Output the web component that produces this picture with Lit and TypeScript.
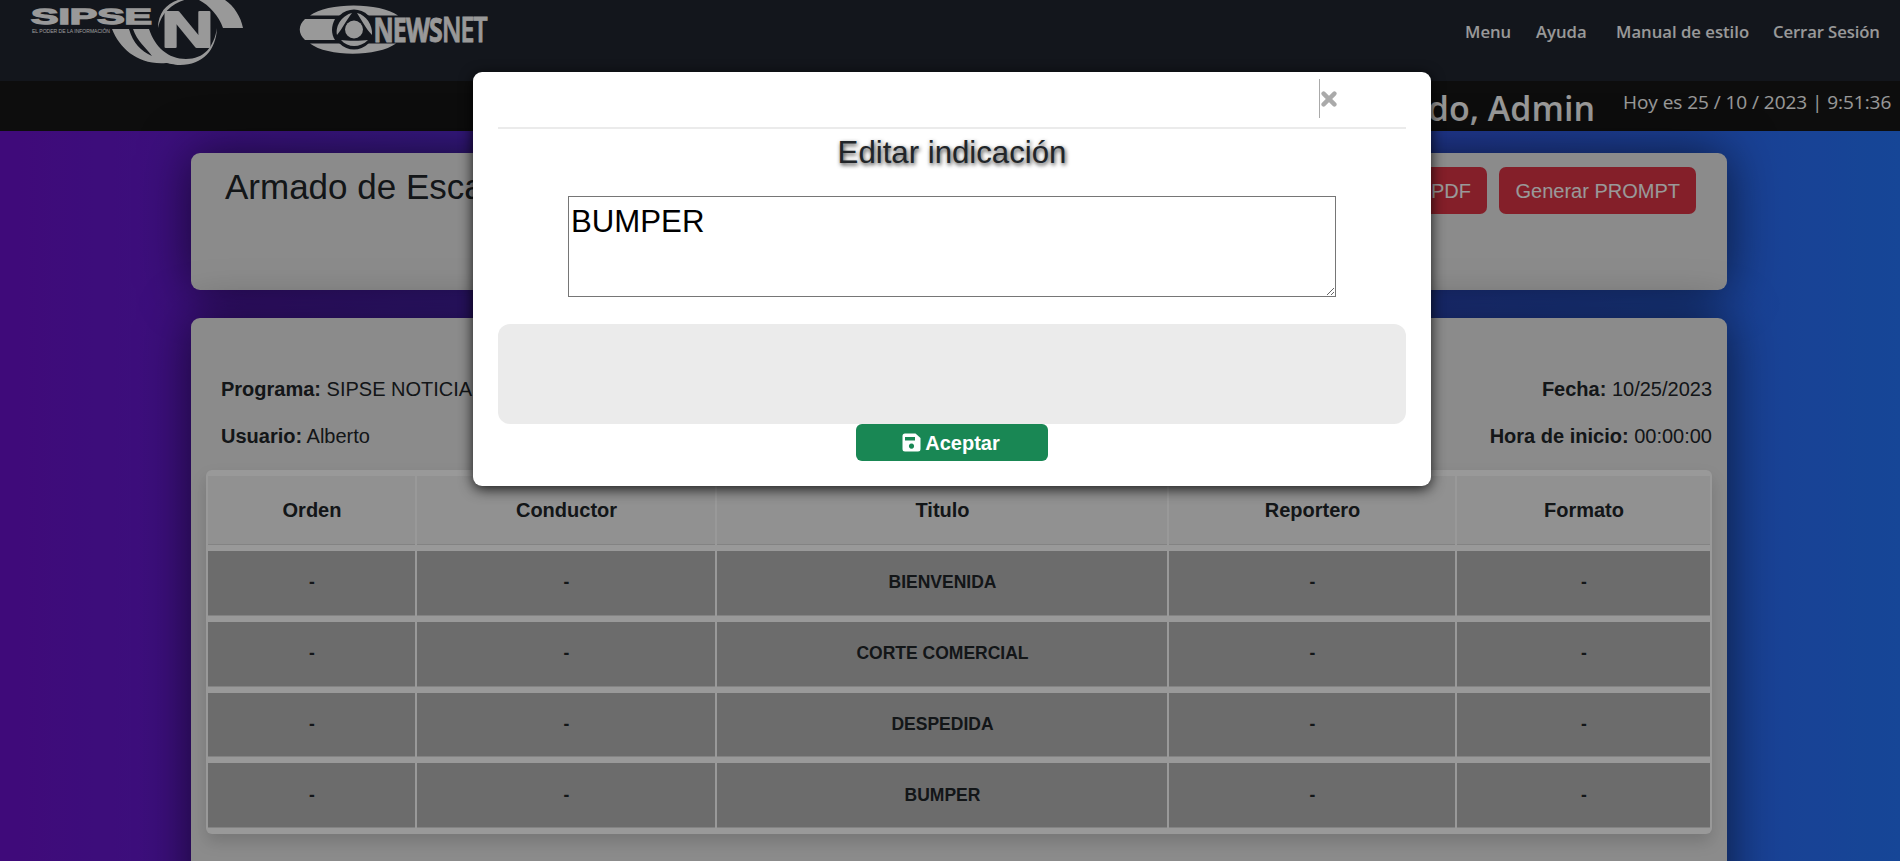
import { LitElement, html, css } from "lit";
import { customElement } from "lit/decorators.js";

const sans = css`"Liberation Sans", Arial, sans-serif`;
const ui = css`"Open Sans", "Noto Sans", sans-serif`;

@customElement("brand-sipse")
class BrandSipse extends LitElement {
  static styles = css`
    :host { display: block; }
    svg { display: block; overflow: hidden; }
    .word { font: bold 22px ${sans}; }
    .tag { font: 5px ${sans}; }
    .big { font: bold 50px ${sans}; }
  `;
  render() {
    return html`<svg width="225" height="75" viewBox="20 0 225 75" fill="#fff">
      <text class="word" x="31" y="23.500" textLength="121" lengthAdjust="spacingAndGlyphs" stroke="#fff" stroke-width="1.300">SIPSE</text>
      <text class="tag" x="32" y="33" textLength="78" lengthAdjust="spacingAndGlyphs">EL PODER DE LA INFORMACIÓN</text>
      <path d="M112 29H129C133 43 141 51 152 56C146 48 137 41 133 29H149C155 47 168 59 186 59C204 59 214 47 217 28C216 50 203 65 180 65C174 65 168 63 166 63C138 65 120 49 112 29Z"/>
      <path d="M158 28C158 8 173 -2 191 -2C175 2 162 10 158 28Z"/>
      <path d="M182 0H225C234 6 241 17 243 28H223C219 16 209 5 199 0Z"/>
      <text class="big" x="161" y="46.500" textLength="53" lengthAdjust="spacingAndGlyphs" stroke="#fff" stroke-width="1.800" stroke-linejoin="round">N</text>
    </svg>`;
  }
}

@customElement("brand-newsnet")
class BrandNewsnet extends LitElement {
  static styles = css`
    :host { display: block; }
    svg { display: block; overflow: visible; }
    .word { font: bold 34px ${ui}; letter-spacing: -1.2px; }
    .light { font-weight: 600; }
  `;
  render() {
    return html`<svg width="200" height="60" viewBox="295 0 200 60" fill="#fff">
      <path d="M310 15.500C327 2 380 2 398 15.500Z"/>
      <path d="M310 43.500C327 57 378 57 396 43.500Z"/>
      <path d="M305 19H335C331 26 331 34 335 40H305C298 34 298 25 305 19Z"/>
      <circle cx="354" cy="29.500" r="20" fill="#202530"/>
      <circle cx="354" cy="29.500" r="9"/>
      <path d="M352 13C343 15 335 25 337 35C342 29 347 19 352 13Z"/>
      <path d="M357 13C366 15 373 25 372 35C366 29 361 19 357 13Z"/>
      <path d="M341 40C346 41 362 41 368 40C360 48 348 48 341 40Z"/>
      <text class="word" transform="translate(373.500 41.500) scale(.732 1)" stroke="#fff" stroke-width=".9">NEWS<tspan class="light">NET</tspan></text>
    </svg>`;
  }
}

@customElement("edit-dialog")
class EditDialog extends LitElement {
  static styles = css`
    :host {
      display: flex; flex-direction: column; box-sizing: border-box;
      width: 958px; height: 414px; padding: 7px 25px 25px;
      background: #fff; border-radius: 9px; box-shadow: 0 3px 14px rgba(0,0,0,.85);
      font-family: ${sans}; color: #212529;
    }
    .top { height: 48px; display: flex; justify-content: flex-end; padding-right: 68px; border-bottom: 2px solid #ebebeb; }
    .close { height: 39px; border-left: 1px solid #aaa; display: flex; align-items: center; padding: 0 1px; }
    h2 { margin: 6px 0 0; font-size: 31.200px; line-height: 36px; font-weight: 400; text-align: center; text-shadow: 1px 2px 4px rgba(0,0,0,.8); }
    textarea {
      box-sizing: border-box; width: 768px; height: 101px; margin: 25px auto 0; padding: 2px;
      border: 1px solid #767676; border-radius: 0; font: 31.200px/45px ${sans}; color: #000; background: #fff;
    }
    .panel { height: 100px; margin-top: 27px; border-radius: 12px; background: #ebebeb; }
    .ok {
      align-self: center; width: 192px; height: 37px; border: 0; border-radius: 6px; padding: 0 2px 0 0;
      display: flex; align-items: center; justify-content: center; gap: 4px;
      background: #198754; color: #fff; font: bold 20px ${sans};
    }
    .ok span { padding-top: 1px; }
  `;
  render() {
    return html`
      <div class="top"><div class="close">
        <svg width="16" height="16" viewBox="0 0 16 16"><path d="M2.600 2.600 13.400 13.400M13.400 2.600 2.600 13.400" stroke="#aaa" stroke-width="4.400" stroke-linecap="round"/></svg>
      </div></div>
      <h2>Editar indicación</h2>
      <textarea .value=${"BUMPER"}></textarea>
      <div class="panel"></div>
      <button class="ok">
        <svg width="19" height="19" viewBox="0 0 19 19" fill="#fff"><path fill-rule="evenodd" d="M3 .5H13.500L18.500 5V16A2.500 2.500 0 0 1 16 18.500H3A2.500 2.500 0 0 1 .5 16V3A2.500 2.500 0 0 1 3 .5ZM3 4V7.500H13V4ZM9.500 10.500A2.600 2.600 0 1 0 9.510 10.500Z"/></svg>
        <span>Aceptar</span>
      </button>`;
  }
}

@customElement("app-root")
class AppRoot extends LitElement {
  static styles = css`
    :host { display: block; position: relative; height: 861px; overflow: hidden; font-family: ${sans}; color: #212529; }
    .page { height: 861px; display: flex; flex-direction: column; background: linear-gradient(to right, #6a11cb, #2575fc); }
    header { height: 81px; flex: none; background: #202530; display: flex; box-sizing: border-box; padding: 0 21px 0 20px; }
    .second { margin-left: 50px; }
    nav { margin-left: auto; display: flex; padding-top: 19px; font: 600 16.700px/26px ${ui}; color: #fff; white-space: nowrap; }
    .l1 { width: 71px; } .l2 { width: 80px; } .l3 { width: 157px; } .l4 { width: 106px; letter-spacing: -.1px; }
    .bar { height: 50px; flex: none; background: #161616; color: #fff; display: flex; justify-content: flex-end; box-sizing: border-box; padding-right: 9px; font-family: ${ui}; white-space: nowrap; }
    .hello { font-weight: 600; font-size: 34px; line-height: 54px; }
    .date { font-size: 19px; line-height: 42px; letter-spacing: -.05px; width: 268px; margin-left: 28px; }
    main { flex: 1; min-height: 0; padding: 22px 173px 0 191px; display: flex; flex-direction: column; gap: 28px; }
    .card { background: #e8e8e8; border-radius: 9px; box-shadow: 0 0 50px rgba(0,0,0,.6); }
    .head { height: 137px; flex: none; display: flex; justify-content: space-between; box-sizing: border-box; padding: 14px 31px 0 34px; }
    h1 { margin: 0; font-size: 35px; line-height: 40px; font-weight: 400; }
    .btns { display: flex; gap: 12px; }
    .btn { height: 47px; box-sizing: border-box; padding: 1px 16px 0 16.500px; border: 0; border-radius: 7px; background: #dc3545; color: #fff; font: 20px ${sans}; }
    .body { height: 650px; flex: none; padding: 56px 15px 0; }
    .info { display: flex; justify-content: space-between; font-size: 20px; line-height: 30px; padding-left: 15px; margin-bottom: 17px; }
    .table {
      margin-top: 19px; background: #fff; border-radius: 6px; padding: 6px 2px; display: grid;
      grid-template-columns: 207px 298px 450px 286px 253px; gap: 6px 2px; grid-template-rows: 69px repeat(4, 64.750px);
      box-shadow: 0 8px 16px rgba(0,0,0,.15);
    }
    .cell { display: flex; align-items: center; justify-content: center; font-weight: bold; font-size: 17.500px; background: #b4b4b4; border-bottom: 1px solid #dadada; padding-left: 1px; }
    .th { background: #f2f2f2; font-size: 20px; }
    .shade { position: absolute; inset: 0; background: rgba(0,0,0,.4); }
    edit-dialog { position: absolute; left: 473px; top: 72px; }
  `;
  heads = ["Orden", "Conductor", "Titulo", "Reportero", "Formato"];
  rows = ["BIENVENIDA", "CORTE COMERCIAL", "DESPEDIDA", "BUMPER"];
  render() {
    return html`
      <div class="page">
        <header>
          <brand-sipse></brand-sipse>
          <brand-newsnet class="second"></brand-newsnet>
          <nav><span class="l1">Menu</span><span class="l2">Ayuda</span><span class="l3">Manual de estilo</span><span class="l4">Cerrar Sesión</span></nav>
        </header>
        <div class="bar"><span class="hello">Bienvenido, Admin</span><span class="date">Hoy es 25 / 10 / 2023 | 9:51:36</span></div>
        <main>
          <section class="card head">
            <h1>Armado de Escaleta</h1>
            <div class="btns"><button class="btn">Generar PDF</button><button class="btn">Generar PROMPT</button></div>
          </section>
          <section class="card body">
            <div class="info"><span><b>Programa:</b> SIPSE NOTICIAS</span><span><b>Fecha:</b> 10/25/2023</span></div>
            <div class="info"><span><b>Usuario:</b> Alberto</span><span><b>Hora de inicio:</b> 00:00:00</span></div>
            <div class="table">
              ${this.heads.map((h) => html`<div class="cell th">${h}</div>`)}
              ${this.rows.map((r) => ["-", "-", r, "-", "-"].map((c) => html`<div class="cell">${c}</div>`))}
            </div>
          </section>
        </main>
      </div>
      <div class="shade"></div>
      <edit-dialog></edit-dialog>`;
  }
}
